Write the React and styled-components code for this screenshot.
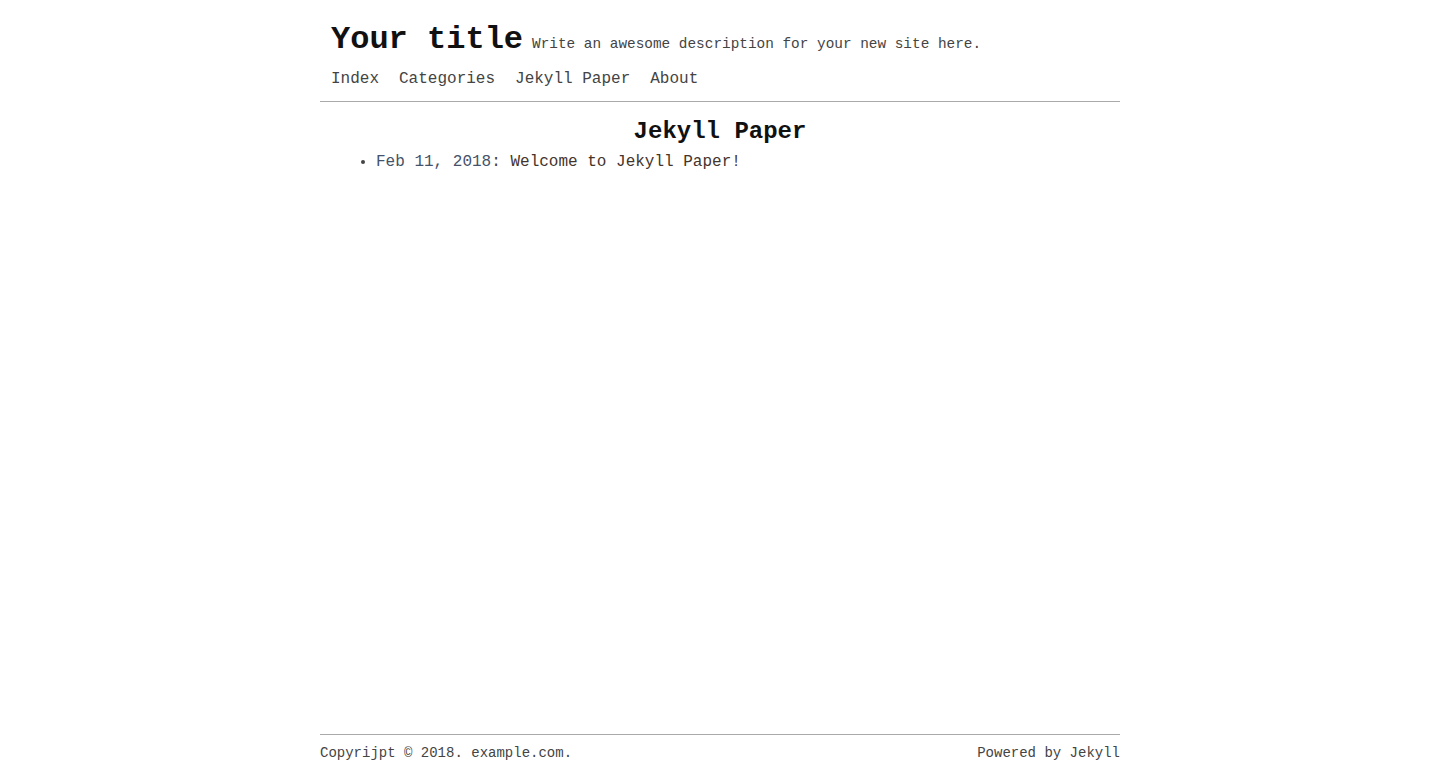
import React from 'react';
import styled, {createGlobalStyle} from 'styled-components';

const GlobalStyle = createGlobalStyle`
    html, body {
        margin: 0;
        padding: 0;
        background: #fff;
    }
    body {
        font-family: "Liberation Mono", "Courier New", monospace;
        color: #444;
    }
`;

export default function App() {
    return (
        <Page>
            <GlobalStyle />
            <Header>
                <TitleRow>
                    <SiteTitle>Your title</SiteTitle>
                    <Description>Write an awesome description for your new site here.</Description>
                </TitleRow>
                <Nav>
                    <NavLink href='#'>Index</NavLink>
                    <NavLink href='#'>Categories</NavLink>
                    <NavLink href='#'>Jekyll Paper</NavLink>
                    <NavLink href='#'>About</NavLink>
                </Nav>
            </Header>

            <Main>
                <PageTitle>Jekyll Paper</PageTitle>
                <PostList>
                    <li>
                        <PostDate>Feb 11, 2018</PostDate>: <PostLink href='#'>Welcome to Jekyll Paper!</PostLink>
                    </li>
                </PostList>
            </Main>

            <Footer>
                <span>Copyrijpt © 2018. example.com.</span>
                <span>Powered by Jekyll</span>
            </Footer>
        </Page>
    );
}

const Page = styled.div`
    width: 800px;
    margin: 0 auto;
    min-height: 100vh;
    display: flex;
    flex-direction: column;
    box-sizing: border-box;
`;

const Header = styled.header`
    padding: 21px 11px 13px;
    border-bottom: 1px solid #aaa;
`;

const TitleRow = styled.div`
    display: flex;
    align-items: baseline;
    gap: 9px;
`;

const SiteTitle = styled.h1`
    margin: 0;
    font-size: 32px;
    font-weight: bold;
    color: #111;
`;

const Description = styled.span`
    font-size: 14.4px;
    color: #444;
`;

const Nav = styled.nav`
    display: flex;
    gap: 20px;
    margin-top: 12px;
    font-size: 16px;
`;

const NavLink = styled.a`
    color: #444;
    text-decoration: none;
`;

const Main = styled.main`
    flex: 1;
    padding: 16px 10px 0;
`;

const PageTitle = styled.h2`
    margin: 0 0 8px;
    text-align: center;
    font-size: 24px;
    font-weight: bold;
    color: #111;
`;

const PostList = styled.ul`
    margin: 0;
    padding-left: 46px;
    font-size: 16px;
    li {
        line-height: 18px;
    }
`;

const PostDate = styled.span`
    color: #44526a;
`;

const PostLink = styled.a`
    color: #44342c;
    text-decoration: none;
`;

const Footer = styled.footer`
    display: flex;
    justify-content: space-between;
    border-top: 1px solid #aaa;
    padding: 10px 0 9px;
    font-size: 14px;
    line-height: 17px;
    color: #444;
`;
